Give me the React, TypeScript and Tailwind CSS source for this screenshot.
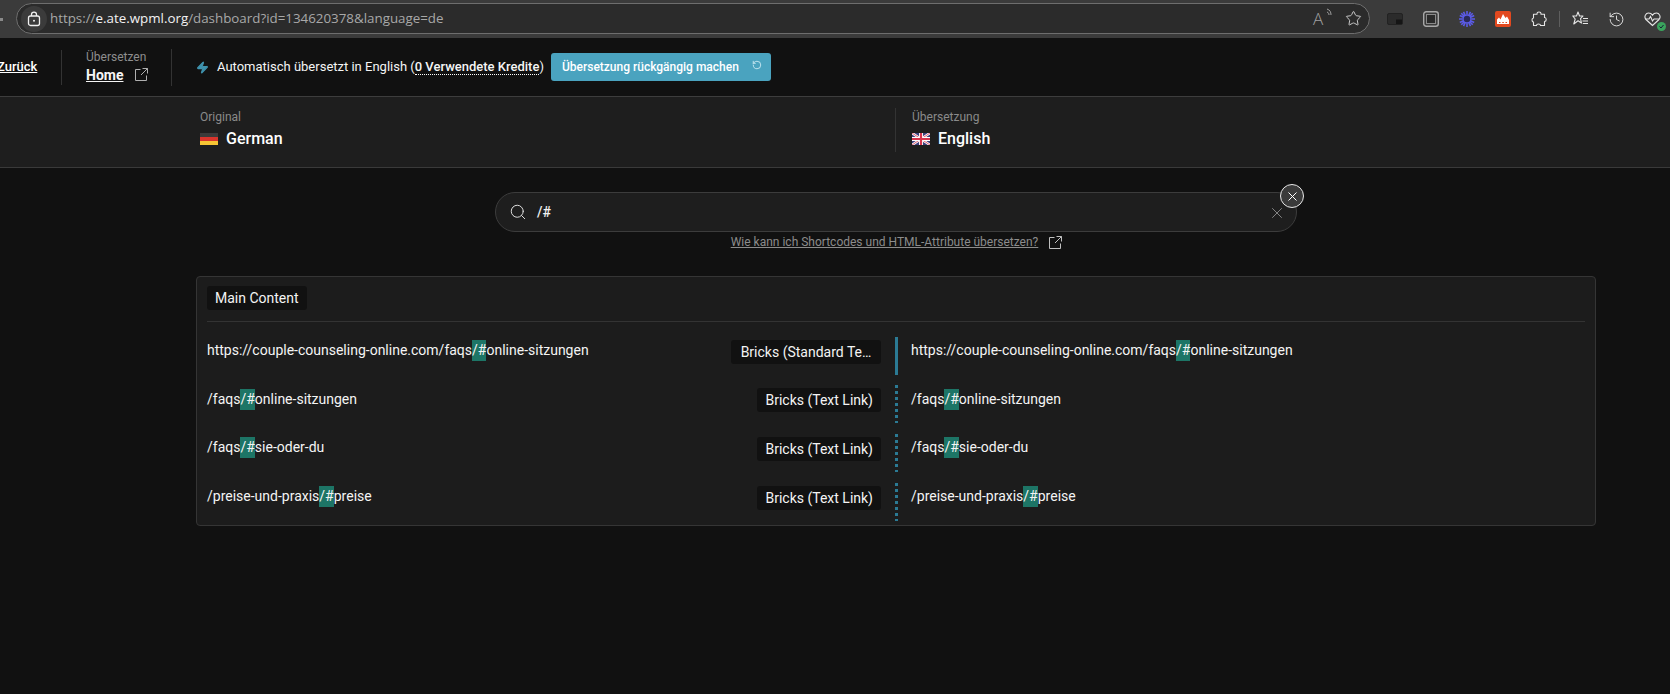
import React from "react";
import { Search, X, Zap, RotateCcw, Star, History } from "lucide-react";

const Hl = () => <span className="bg-[#1d7566] inline-block h-[21px] leading-[21px]">/#</span>;

const LinkOut = ({ size, className }: { size: number; className?: string }) => (
  <svg width={size} height={size} viewBox="0 0 13 13" fill="none" stroke="currentColor" strokeWidth="1" className={className}>
    <path d="M5.500 1.500H.5V12.500H11.500V7.500" />
    <path d="M7.500 .5H12.500V5.500M12.500 .5L6 7" />
  </svg>
);

function Row({ pre, post, tag, solid, h, wide }: { pre: string; post: string; tag: string; solid?: boolean; h: string; wide?: boolean }) {
  const text = (
    <div className="text-[14px] leading-[21px] text-[#f4f4f4] whitespace-nowrap">
      {pre}
      <Hl />
      {post}
    </div>
  );
  return (
    <div className={`flex items-center ${h}`}>
      <div className="w-[524px] shrink-0">{text}</div>
      <div className="w-[150px] shrink-0 flex justify-end">
        <span
          className={
            wide
              ? "w-[150px] text-center bg-[#111111] rounded-[3px] h-[24px] leading-[24px] text-[14px] text-[#f4f4f4] whitespace-nowrap mt-[2px]"
              : "bg-[#111111] rounded-[3px] h-[24px] leading-[24px] px-[8px] text-[14px] text-[#f4f4f4] whitespace-nowrap mt-[2px]"
          }
        >
          {tag}
        </span>
      </div>
      <div
        className={
          solid
            ? "ml-[14px] w-[3px] h-[38px] mt-[10px] bg-[#2b7a94] shrink-0"
            : "ml-[14px] w-[3px] h-[38px] mt-[10px] shrink-0 bg-[repeating-linear-gradient(to_bottom,#2b7a94_0_3px,transparent_3px_6px)]"
        }
      />
      <div className="ml-[13px]">{text}</div>
    </div>
  );
}

const De = () => (
  <svg width="18" height="12" viewBox="0 0 18 12" className="shrink-0">
    <rect width="18" height="4" fill="#3a3a3a" />
    <rect y="4" width="18" height="4" fill="#d8342c" />
    <rect y="8" width="18" height="4" fill="#f6c534" />
  </svg>
);

const Uk = () => (
  <svg width="18" height="12" viewBox="0 0 18 12" className="shrink-0">
    <rect width="18" height="12" fill="#3c3f7c" />
    <path d="M0 0L18 12M18 0L0 12" stroke="#fff" strokeWidth="2.4" />
    <path d="M0 0L18 12M18 0L0 12" stroke="#d8344c" strokeWidth="0.8" />
    <path d="M9 0V12M0 6H18" stroke="#fff" strokeWidth="4" />
    <path d="M9 0V12M0 6H18" stroke="#d8344c" strokeWidth="2.2" />
  </svg>
);

const TbSlot = ({ children }: { children: React.ReactNode }) => (
  <div className="w-[36px] h-[30px] flex items-center justify-center shrink-0">{children}</div>
);

export default function App() {
  return (
    <div className="h-screen overflow-hidden bg-[#111111] text-white font-['Roboto',sans-serif]">
      {/* browser bar */}
      <div className="h-[38px] bg-[#3b3b3b] flex items-center">
        <div className="w-[16px] shrink-0 flex items-center">
          <div className="w-[3px] h-[3px] bg-[#8a8a8a]" />
        </div>
        <div className="w-[1354px] h-[31px] shrink-0 rounded-full border border-[#6e6e6e] bg-[#2b2b2b] flex items-center font-['Open_Sans',sans-serif] text-[13.35px] mb-[1px]">
          <div className="ml-[4px] w-[26px] h-[26px] rounded-full bg-[#3b3b3b] flex items-center justify-center">
            <svg width="14" height="16" viewBox="0 0 14 16" fill="none" stroke="#f0f0f0" strokeWidth="1.3">
              <rect x="1.500" y="5" width="11" height="9.500" rx="2" />
              <path d="M4.500 5V3.600a2.500 2.500 0 0 1 5 0V5" />
              <circle cx="7" cy="9.700" r="1" fill="#f0f0f0" stroke="none" />
            </svg>
          </div>
          <div className="ml-[3px] text-[#a8a8a8] whitespace-nowrap">
            https://<span className="text-[#f2f2f2] font-medium">e.ate.wpml.org</span>/dashboard?id=134620378&amp;language=de
          </div>
          <div className="ml-auto flex items-center gap-[12px] pr-[7px] text-[#a0a0a0]">
            <div className="relative w-[20px] text-[17px] leading-none font-['Open_Sans',sans-serif] font-light">
              A
              <svg width="8" height="10" viewBox="0 0 8 10" fill="none" stroke="#a0a0a0" strokeWidth="1" className="absolute top-[-2px] right-[-1px]">
                <path d="M1 1c3 1 4 3 4 6M1 4c1.500.5 2 1.500 2 3" />
              </svg>
            </div>
            <Star size={17} strokeWidth={1.4} className="text-[#c8c8c8]" />
          </div>
        </div>
        <div className="w-[7px] shrink-0" />
        <TbSlot>
          <svg width="16" height="12" viewBox="0 0 16 12">
            <rect x="0.500" y="0.500" width="15" height="11" rx="1.500" fill="#2b2b2b" stroke="#222" />
            <rect x="9" y="6.500" width="6" height="4.500" fill="#151515" />
          </svg>
        </TbSlot>
        <TbSlot>
          <svg width="16" height="16" viewBox="0 0 16 16" fill="none">
            <rect x="0.700" y="0.700" width="14.600" height="14.600" rx="2.500" stroke="#a8a8a8" strokeWidth="1.400" />
            <rect x="3.500" y="3.500" width="9" height="9" fill="#2a2a2a" stroke="#8a8a8a" />
          </svg>
        </TbSlot>
        <TbSlot>
          <svg width="16" height="16" viewBox="0 0 16 16" fill="none" stroke="#5b5be8" strokeWidth="1.600">
            <path d="M8 0V16M0 8H16M2.300 2.300L13.700 13.700M13.700 2.300L2.300 13.700M4.500 .8L11.500 15.200M11.500 .8L4.500 15.200M.8 4.500L15.200 11.500M15.200 4.500L.8 11.500" />
            <circle cx="8" cy="8" r="2.400" fill="#2a2a5a" stroke="#2a2a5a" />
          </svg>
        </TbSlot>
        <TbSlot>
          <svg width="16" height="16" viewBox="0 0 16 16">
            <rect width="16" height="16" rx="2" fill="#e2491f" />
            <path d="M2 13V8.500L4 6.500L5.500 8.500L8 3L10.500 7L12 5.500L14 9V13Z" fill="#fff" />
            <path d="M4 11.500H5.500M7.300 11.500H8.800M10.500 11.500H12" stroke="#e2491f" strokeWidth="1.200" />
          </svg>
        </TbSlot>
        <TbSlot>
          <svg width="16" height="16" viewBox="0 0 16 16" fill="none" stroke="#e6e6e6" strokeWidth="1.100" strokeLinejoin="round">
            <path d="M6 2.500C6 .5 10 .5 10 2.500V3.200H13.500V6.500C15.800 6.500 15.800 10.500 13.500 10.500V14.500H9.500C9.500 12.500 5.500 12.500 5.500 14.500H2.500V11C.5 11 .5 7 2.500 7V3.200H6Z" />
          </svg>
        </TbSlot>
        <div className="w-[1px] h-[16px] bg-[#5e5e5e] mx-[1px] ml-[2px]" />
        <div className="w-[2px]" />
        <TbSlot>
          <svg width="17" height="16" viewBox="0 0 17 16" fill="none" stroke="#e6e6e6" strokeWidth="1.100" strokeLinejoin="round">
            <path d="M6 1L7.500 5H11L8.500 7.700L9.500 12L6 9.800L1.800 13L3.200 8L.8 5H4.500Z" />
            <path d="M11 7.500H16M10.500 10H16M10.800 12.500H16" />
          </svg>
        </TbSlot>
        <TbSlot>
          <History size={17} strokeWidth={1.3} className="text-[#e6e6e6]" />
        </TbSlot>
        <TbSlot>
          <div className="relative">
            <svg width="17" height="15" viewBox="0 0 17 15" fill="none" stroke="#e6e6e6" strokeWidth="1.100">
              <path d="M8.500 13.500L2 7.500C-.5 4.500 2 1 4.500 1C6.500 1 7.800 2 8.500 3.200C9.200 2 10.500 1 12.500 1C15 1 17.500 4.500 15 7.500Z" />
              <path d="M1 7H5L6.500 4.500L8.500 9L10 7H15" />
            </svg>
            <div className="absolute right-[-5px] bottom-[-4px] w-[9px] h-[9px] rounded-full bg-[#3aa35c] flex items-center justify-center">
              <svg width="7" height="7" viewBox="0 0 7 7" fill="none" stroke="#123" strokeWidth="1">
                <path d="M1.500 3.500L3 5L5.500 2" />
              </svg>
            </div>
          </div>
        </TbSlot>
      </div>

      {/* nav */}
      <div className="h-[59px] border-b border-[#3d3d3d] flex items-center">
        <span className="ml-[-3px] w-[42px] text-[13px] font-medium underline shrink-0 leading-none mb-[2px]">Zurück</span>
        <div className="ml-[22px] w-[1px] h-[35px] bg-[#333333]" />
        <div className="ml-[24px] w-[85px] shrink-0 mb-[1px]">
          <div className="text-[12px] leading-[14px] text-[#8e8e8e]">Übersetzen</div>
          <div className="flex items-center mt-[2px]">
            <span className="text-[14px] leading-[18px] font-bold underline text-[#f5f5f5]">Home</span>
            <LinkOut size={13} className="ml-[12px] text-[#b0b0b0]" />
          </div>
        </div>
        <div className="w-[1px] h-[37px] bg-[#333333]" />
        <Zap size={13} className="ml-[24px] text-[#3f93ae] fill-[#3f93ae]" />
        <div className="ml-[8px] text-[13px] text-[#f5f5f5] whitespace-nowrap">
          Automatisch übersetzt in English (
          <span className="font-medium border-b border-dotted border-white">0 Verwendete Kredite</span>)
        </div>
        <div className="ml-[7px] w-[220px] h-[28px] rounded-[3px] bg-[#4aa3bf] flex items-center pl-[11px] text-[12px] font-medium text-white whitespace-nowrap mt-[-1px]">
          Übersetzung rückgängig machen
          <RotateCcw size={10} className="ml-[13px] mb-[3px] text-[#d4eef6]" />
        </div>
      </div>

      {/* language header */}
      <div className="h-[71px] bg-[#1e1e1e] border-b border-[#3a3a3a] flex items-center pb-[4px]">
        <div className="ml-[200px] w-[695px] shrink-0">
          <div className="text-[12px] leading-[14px] text-[#8a8a8a]">Original</div>
          <div className="flex items-center mt-[4px]">
            <De />
            <span className="ml-[8px] text-[16px] leading-[22px] font-medium">German</span>
          </div>
        </div>
        <div className="w-[1px] h-[44px] bg-[#333333]" />
        <div className="ml-[16px]">
          <div className="text-[12px] leading-[14px] text-[#8a8a8a]">Übersetzung</div>
          <div className="flex items-center mt-[4px]">
            <Uk />
            <span className="ml-[8px] text-[16px] leading-[22px] font-medium">English</span>
          </div>
        </div>
      </div>

      {/* search */}
      <div className="ml-[495px] w-[802px] flex flex-col items-center mt-[24px]">
        <div className="relative w-full h-[40px] rounded-[20px] bg-[#1e1e1e] border border-[#3c3c3c] flex items-center">
          <Search size={18} strokeWidth={1.3} className="ml-[13px] text-[#e0e0e0]" />
          <span className="ml-[10px] text-[14px] font-medium text-[#f0f0f0]">/#</span>
          <X size={18} strokeWidth={1.2} className="ml-auto mr-[10px] mt-[2px] text-[#8e8e8e]" />
          <div className="absolute right-[-8px] top-[-9px] w-[24px] h-[24px] rounded-full bg-[#3a3a3a] border border-[#e8e8e8] flex items-center justify-center">
            <X size={15} strokeWidth={1.6} className="text-white" />
          </div>
        </div>
        <div className="flex items-center h-[20px] pl-[1px]">
          <span className="text-[12px] text-[#8c8c8c] underline whitespace-nowrap">Wie kann ich Shortcodes und HTML-Attribute übersetzen?</span>
          <LinkOut size={13} className="ml-[11px] text-[#c0c0c0]" />
        </div>
      </div>

      {/* panel */}
      <div className="ml-[196px] mt-[24px] w-[1400px] h-[250px] rounded-[4px] bg-[#1c1c1c] border border-[#353535] px-[10px]">
        <div className="h-[45px] pt-[9px] border-b border-[#333333]">
          <span className="inline-block bg-[#111111] rounded-[3px] h-[24px] leading-[24px] px-[8px] text-[14px] text-[#f4f4f4]">Main Content</span>
        </div>
        <div className="pt-[4px]">
          <Row pre="https://couple-counseling-online.com/faqs" post="online-sitzungen" tag="Bricks (Standard Te…" solid wide h="h-[49px]" />
          <Row pre="/faqs" post="online-sitzungen" tag="Bricks (Text Link)" h="h-[48px]" />
          <Row pre="/faqs" post="sie-oder-du" tag="Bricks (Text Link)" h="h-[49px]" />
          <Row pre="/preise-und-praxis" post="preise" tag="Bricks (Text Link)" h="h-[49px]" />
        </div>
      </div>
    </div>
  );
}
